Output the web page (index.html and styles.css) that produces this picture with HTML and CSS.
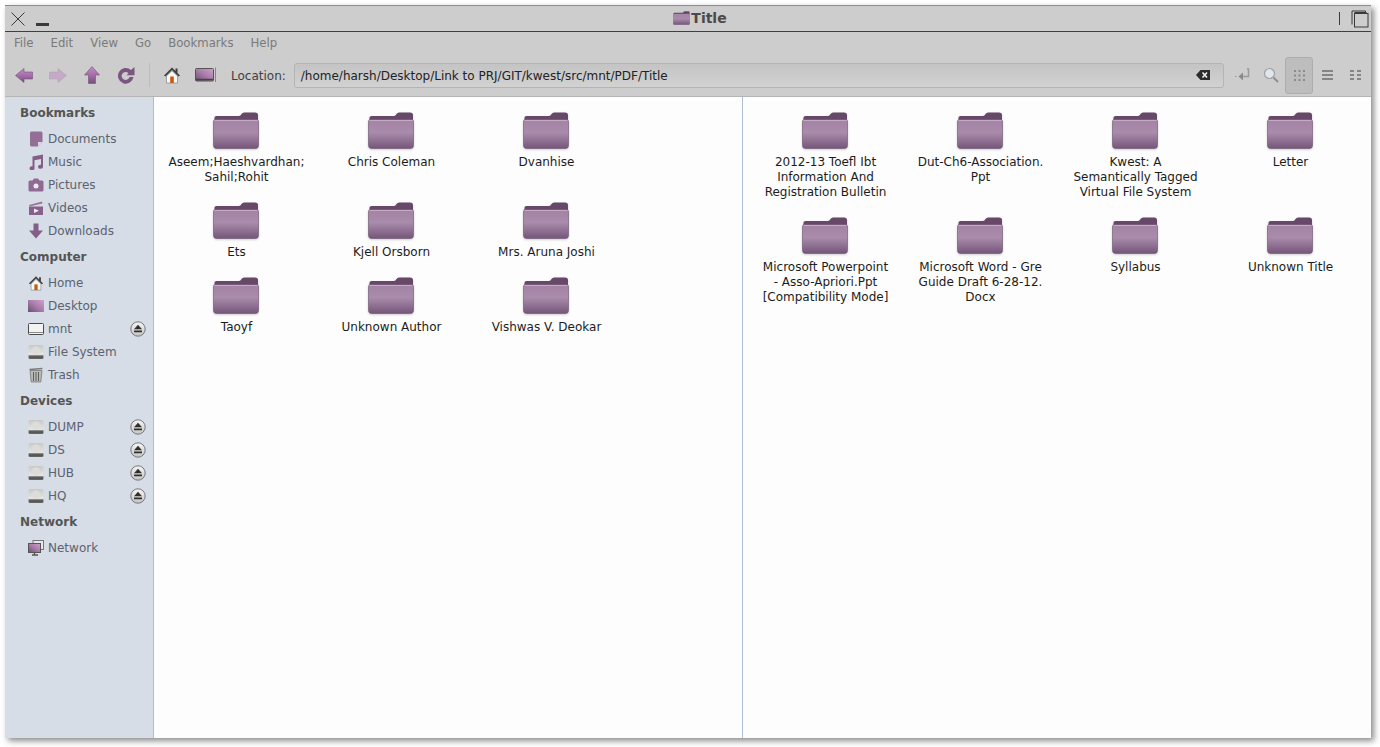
FILE: index.html
```html
<!DOCTYPE html>
<html lang="en">
<head>
  <meta charset="UTF-8">
  <title>Title</title>
  <link rel="stylesheet" href="styles.css">
</head>
<body>
  <svg class="defs" width="0" height="0">
    <defs>
      <linearGradient id="folderFront" x1="0" y1="0" x2="0" y2="1">
        <stop offset="0" stop-color="#a383a4"/>
        <stop offset="0.45" stop-color="#a98bab"/>
        <stop offset="1" stop-color="#75567a"/>
      </linearGradient>
      <linearGradient id="arrowFill" x1="0" y1="0" x2="0" y2="1">
        <stop offset="0" stop-color="#c48cc4"/>
        <stop offset="0.5" stop-color="#a56ea8"/>
        <stop offset="1" stop-color="#74507a"/>
      </linearGradient>
      <linearGradient id="desk" x1="0" y1="1" x2="1" y2="0">
        <stop offset="0" stop-color="#6d4e72"/>
        <stop offset="0.5" stop-color="#a97ca9"/>
        <stop offset="1" stop-color="#cfa0cc"/>
      </linearGradient>
      <linearGradient id="driveFill" x1="0" y1="0" x2="0" y2="1">
        <stop offset="0" stop-color="#c9c9c7"/>
        <stop offset="0.72" stop-color="#e6e6e4"/>
        <stop offset="0.74" stop-color="#8a8a88"/>
        <stop offset="1" stop-color="#5f5f5d"/>
      </linearGradient>
      <linearGradient id="ejectFill" x1="0" y1="0" x2="0" y2="1">
        <stop offset="0" stop-color="#f6f6f4"/>
        <stop offset="1" stop-color="#c4c4c2"/>
      </linearGradient>
      <symbol id="folder" viewBox="0 0 46 37">
        <path d="M1.500 5.500 Q1.500 4 3.500 4 L26 4 Q27.500 4 28.500 2 Q29.500 .5 31 .5 L42 .5 Q45 .5 45 3 L45 10 L1.500 10Z" fill="#674869"/>
        <path d="M.5 9.500 Q.5 7.500 2.500 7.500 L43.500 7.500 Q45.500 7.500 45.500 9.500 L45.500 33.500 Q45.500 36.500 42.500 36.500 L3.500 36.500 Q.5 36.500 .5 33.500Z" fill="url(#folderFront)" stroke="#6d5070" stroke-width=".6"/>
        <path d="M1.500 8.500 L44.500 8.500" stroke="#c3abc4" stroke-width="1"/>
      </symbol>
      <symbol id="drive" viewBox="0 0 16 16">
        <rect x=".5" y="1" width="15" height="14" rx="1.500" fill="url(#driveFill)"/>
        <circle cx="8" cy="6.500" r="4" fill="#dcdcda"/>
        <path d="M1 13 H15" stroke="#3f3f3f" stroke-width="1"/>
      </symbol>
      <symbol id="eject" viewBox="0 0 16 16">
        <circle cx="8" cy="8" r="7.200" fill="url(#ejectFill)" stroke="#77777a" stroke-width="1"/>
        <path d="M8 3.800 L12 8.200 L4 8.200Z M4 9.400 H12 V11.200 H4Z" fill="#2e2e2e"/>
      </symbol>
      <symbol id="home" viewBox="0 0 18 18">
        <path d="M3.500 10 L9 4.800 L14.500 10 V17 H3.500Z" fill="#f7f7f5" stroke="#77777a" stroke-width=".6"/>
        <path d="M9 1.500 L1 9.500 L2.500 10.500 L9 4 L15.500 10.500 L17 9.500 L14.500 7 V2.500 H12.500 V5Z" fill="#3f3f3f"/>
        <rect x="7.200" y="10.500" width="3.600" height="6.500" fill="#c55a11"/>
      </symbol>
    </defs>
  </svg>

  <div class="window">
    <header class="titlebar">
      <div class="title-left">
        <svg width="14" height="14" viewBox="0 0 14 14"><path d="M.5 .5 L13.500 13.500 M13.500 .5 L.5 13.500" stroke="#3a3a3a" stroke-width="1"/></svg>
        <span class="minimize"></span>
      </div>
      <div class="title-center">
        <svg class="title-icon" width="17" height="14"><use href="#folder"/></svg>
        <span>Title</span>
      </div>
      <div class="title-right">
        <span class="divider"></span>
        <svg width="18" height="18" viewBox="0 0 18 18" fill="none" stroke="#3a3a3a" stroke-width="1"><path d="M1 14.500 V1 H14.500 V3"/><rect x="3.500" y="3.500" width="13.500" height="13.500"/><path d="M3.500 2.500 H15.500"/></svg>
      </div>
    </header>

    <nav class="menubar">
      <span>File</span><span>Edit</span><span>View</span><span>Go</span><span>Bookmarks</span><span>Help</span>
    </nav>

    <div class="toolbar">
      <svg class="tool-back" width="18" height="15" viewBox="0 0 18 15"><path d="M.5 7.500 L9 .5 V4 H17.500 V11 H9 V14.500Z" fill="url(#arrowFill)" stroke="#74507a" stroke-width=".6"/></svg>
      <svg class="tool-forward" width="18" height="15" viewBox="0 0 18 15"><path d="M17.500 7.500 L9 .5 V4 H.5 V11 H9 V14.500Z" fill="#c4aac6" stroke="#b39ab6" stroke-width=".5"/></svg>
      <svg class="tool-up" width="16" height="18" viewBox="0 0 16 18"><path d="M8 .5 L15.500 9 H11.500 V17.500 H4.500 V9 H.5Z" fill="url(#arrowFill)" stroke="#74507a" stroke-width=".6"/></svg>
      <svg class="tool-reload" width="18" height="18" viewBox="0 0 18 18"><path d="M14 4 A7.800 7.800 0 1 0 16.500 11 H12.500 A4 4 0 1 1 11.500 7.200 L9.500 9.200 H17.500 V1Z" fill="#7a5680"/></svg>
      <span class="tool-sep"></span>
      <svg class="tool-home" width="18" height="18"><use href="#home"/></svg>
      <svg class="tool-desk" width="22" height="16" viewBox="0 0 22 16"><rect x=".5" y="1.500" width="18" height="12.500" rx="1" fill="url(#desk)" stroke="#555"/><path d="M1 12.500 H18" stroke="#444" stroke-width="1.500"/><path d="M20.500 .5 V15" stroke="#888"/></svg>
      <span class="location-label">Location:</span>
      <div class="location-entry">
        <span class="location-path">/home/harsh/Desktop/Link to PRJ/GIT/kwest/src/mnt/PDF/Title</span>
        <svg width="14" height="10" viewBox="0 0 14 10"><path d="M0 5 L4.500 0 H14 V10 H4.500Z" fill="#2c2c2c"/><path d="M6.500 2.500 L11 7.500 M11 2.500 L6.500 7.500" stroke="#f2f2f2" stroke-width="1.600"/></svg>
      </div>
      <svg class="tool-go" width="16" height="14" viewBox="0 0 16 14" fill="none"><path d="M13 1 H14.500 V8.500 H7" stroke="#9a9a9a" stroke-width="1.500"/><path d="M9 4.500 L4.500 8.500 L9 12.500Z" fill="#8a8a8a"/><path d="M1 8.500 H2.500" stroke="#9a9a9a" stroke-width="1.200"/></svg>
      <svg class="tool-search" width="16" height="16" viewBox="0 0 16 16"><circle cx="6.500" cy="6.500" r="5" fill="#dfe6ee" stroke="#a0a0a0" stroke-width="1.200"/><path d="M10.500 10.500 L15 15" stroke="#8c8c8c" stroke-width="1.800"/></svg>
      <span class="view-active">
        <svg width="11" height="11" viewBox="0 0 11 11" fill="#8a8a8a"><path d="M0 0h2v2H0zM4.500 0h2v2h-2zM9 0h2v2H9zM0 4.500h2v2H0zM4.500 4.500h2v2h-2zM9 4.500h2v2H9zM0 9h2v2H0zM4.500 9h2v2h-2zM9 9h2v2H9z"/></svg>
      </span>
      <svg class="tool-list" width="11" height="10" viewBox="0 0 11 10" fill="#858585"><path d="M0 0h11v2H0zM0 4h11v2H0zM0 8h11v2H0z"/></svg>
      <svg class="tool-compact" width="11" height="10" viewBox="0 0 11 10" fill="#858585"><path d="M0 0h4v2H0zM7 0h4v2H7zM0 4h4v2H0zM7 4h4v2H7zM0 8h4v2H0zM7 8h4v2H7z"/></svg>
    </div>

    <div class="content">
      <aside class="sidebar">
        <h3>Bookmarks</h3>
        <div class="place">
          <svg width="16" height="16" viewBox="0 0 16 16"><path d="M2 2 Q2 .5 3.500 .5 H13 Q14.500 .5 14.500 2 V11 L10 15.500 H3.500 Q2 15.500 2 14Z" fill="#936f96"/><path d="M14.500 11 H10 V15.500Z" fill="#e0d4e2"/></svg>
          <span>Documents</span>
        </div>
        <div class="place">
          <svg width="16" height="16" viewBox="0 0 16 16" fill="#835f88"><path d="M4.500 2.500 L15 .5 V12.500 A2.500 2 0 1 1 13 10.800 V5 L6.500 6.200 V14 A2.500 2 0 1 1 4.500 12.300Z"/></svg>
          <span>Music</span>
        </div>
        <div class="place">
          <svg width="16" height="16" viewBox="0 0 16 16"><path d="M.5 5 Q.5 3.500 2 3.500 H4.500 L6 1.500 H10 L11.500 3.500 H14 Q15.500 3.500 15.500 5 V13 Q15.500 14.500 14 14.500 H2 Q.5 14.500 .5 13Z" fill="#8f6b92"/><circle cx="8" cy="9" r="2.500" fill="#f0e8f0"/></svg>
          <span>Pictures</span>
        </div>
        <div class="place">
          <svg width="16" height="16" viewBox="0 0 16 16"><rect x="1" y="6.500" width="14" height="8.500" fill="#85608a"/><path d="M1 5 L14 1.500 L14.500 3.500 L1.500 6.500Z" fill="#9a769c"/><path d="M6 8.500 L11 10.800 L6 13Z" fill="#f0e8f0"/></svg>
          <span>Videos</span>
        </div>
        <div class="place">
          <svg width="16" height="16" viewBox="0 0 16 16"><path d="M5.500 .5 H10.500 V7.500 H15 L8 15.500 L1 7.500 H5.500Z" fill="#835f88"/></svg>
          <span>Downloads</span>
        </div>

        <h3>Computer</h3>
        <div class="place">
          <svg width="16" height="16"><use href="#home"/></svg>
          <span>Home</span>
        </div>
        <div class="place">
          <svg width="16" height="16" viewBox="0 0 16 16"><rect x="0" y="2" width="16" height="12" fill="url(#desk)"/></svg>
          <span>Desktop</span>
        </div>
        <div class="place">
          <svg width="16" height="16" viewBox="0 0 16 16"><rect x=".5" y="2.500" width="15" height="11" rx="1" fill="#f2f2f0" stroke="#4a4a4a"/><path d="M1 11.500 H15" stroke="#8a8a8a"/></svg>
          <span>mnt</span>
          <svg class="eject" width="16" height="16"><use href="#eject"/></svg>
        </div>
        <div class="place">
          <svg width="16" height="16"><use href="#drive"/></svg>
          <span>File System</span>
        </div>
        <div class="place">
          <svg width="16" height="16" viewBox="0 0 16 16"><path d="M2 3.500 H14 L12.800 15 H3.200Z" fill="#b9b9b6" stroke="#6f6f6f" stroke-width=".7"/><path d="M5.500 5 V14 M8 5 V14 M10.500 5 V14" stroke="#5f5f5f"/><path d="M1.500 2.500 L14.500 1.500" stroke="#7a7a7a" stroke-width="1.400"/></svg>
          <span>Trash</span>
        </div>

        <h3>Devices</h3>
        <div class="place">
          <svg width="16" height="16"><use href="#drive"/></svg>
          <span>DUMP</span>
          <svg class="eject" width="16" height="16"><use href="#eject"/></svg>
        </div>
        <div class="place">
          <svg width="16" height="16"><use href="#drive"/></svg>
          <span>DS</span>
          <svg class="eject" width="16" height="16"><use href="#eject"/></svg>
        </div>
        <div class="place">
          <svg width="16" height="16"><use href="#drive"/></svg>
          <span>HUB</span>
          <svg class="eject" width="16" height="16"><use href="#eject"/></svg>
        </div>
        <div class="place">
          <svg width="16" height="16"><use href="#drive"/></svg>
          <span>HQ</span>
          <svg class="eject" width="16" height="16"><use href="#eject"/></svg>
        </div>

        <h3>Network</h3>
        <div class="place">
          <svg width="16" height="16" viewBox="0 0 16 16"><rect x="5" y=".5" width="10.500" height="9" fill="#e8e8ec" stroke="#777"/><rect x=".5" y="3.500" width="12" height="9" fill="url(#desk)" stroke="#555"/><path d="M4 15 H10 M6.500 12.500 V15" stroke="#555" stroke-width="1.300"/></svg>
          <span>Network</span>
        </div>
      </aside>

      <section class="pane pane-left">
        <div class="file"><svg width="46" height="37"><use href="#folder"/></svg><span>Aseem;Haeshvardhan;<br>Sahil;Rohit</span></div>
        <div class="file"><svg width="46" height="37"><use href="#folder"/></svg><span>Chris Coleman</span></div>
        <div class="file"><svg width="46" height="37"><use href="#folder"/></svg><span>Dvanhise</span></div>
        <div class="file"><svg width="46" height="37"><use href="#folder"/></svg><span>Ets</span></div>
        <div class="file"><svg width="46" height="37"><use href="#folder"/></svg><span>Kjell Orsborn</span></div>
        <div class="file"><svg width="46" height="37"><use href="#folder"/></svg><span>Mrs. Aruna Joshi</span></div>
        <div class="file"><svg width="46" height="37"><use href="#folder"/></svg><span>Taoyf</span></div>
        <div class="file"><svg width="46" height="37"><use href="#folder"/></svg><span>Unknown Author</span></div>
        <div class="file"><svg width="46" height="37"><use href="#folder"/></svg><span>Vishwas V. Deokar</span></div>
      </section>

      <section class="pane pane-right">
        <div class="file"><svg width="46" height="37"><use href="#folder"/></svg><span>2012-13 Toefl Ibt<br>Information And<br>Registration Bulletin</span></div>
        <div class="file"><svg width="46" height="37"><use href="#folder"/></svg><span>Dut-Ch6-Association.<br>Ppt</span></div>
        <div class="file"><svg width="46" height="37"><use href="#folder"/></svg><span>Kwest: A<br>Semantically Tagged<br>Virtual File System</span></div>
        <div class="file"><svg width="46" height="37"><use href="#folder"/></svg><span>Letter</span></div>
        <div class="file"><svg width="46" height="37"><use href="#folder"/></svg><span>Microsoft Powerpoint<br>- Asso-Apriori.Ppt<br>[Compatibility Mode]</span></div>
        <div class="file"><svg width="46" height="37"><use href="#folder"/></svg><span>Microsoft Word - Gre<br>Guide Draft 6-28-12.<br>Docx</span></div>
        <div class="file"><svg width="46" height="37"><use href="#folder"/></svg><span>Syllabus</span></div>
        <div class="file"><svg width="46" height="37"><use href="#folder"/></svg><span>Unknown Title</span></div>
      </section>
    </div>
  </div>
</body>
</html>
```

FILE: styles.css
```css
html, body {
  height: 100%;
}

body {
  margin: 0;
  padding: 5px 9px 9px 5px;
  box-sizing: border-box;
  background-color: #fff;
  font-family: "DejaVu Sans", sans-serif;
  font-size: 12px;
  overflow: hidden;
}

.defs {
  position: absolute;
}

.window {
  height: 100%;
  display: flex;
  flex-direction: column;
  background-color: #cdcdcd;
  box-shadow: 3px 3px 6px rgba(0,0,0,0.45);
}

.titlebar {
  height: 27px;
  flex: none;
  display: flex;
  align-items: center;
  box-sizing: border-box;
  border-top: 1px solid #8c8c8c;
  border-bottom: 1px solid #3f3f3f;
  padding-left: 6px;
  position: relative;
}

.title-left {
  display: flex;
  align-items: center;
  gap: 11px;
}

.minimize {
  width: 13px;
  height: 3px;
  background-color: #3a3a3a;
  margin-top: 11px;
}

.title-center {
  position: absolute;
  left: 24px;
  right: 0;
  top: 4px;
  display: flex;
  justify-content: center;
  align-items: center;
  gap: 1px;
  font-weight: bold;
  font-size: 14px;
  color: #4a4a4a;
  pointer-events: none;
}

.title-right {
  margin-left: auto;
  display: flex;
  align-items: center;
  gap: 11px;
  padding-right: 2px;
}

.divider {
  width: 1px;
  height: 13px;
  background-color: #3a3a3a;
}

.menubar {
  flex: none;
  height: 22px;
  display: flex;
  align-items: center;
  gap: 17px;
  padding-left: 9px;
  font-size: 11.7px;
  color: #7a7a7a;
}

.toolbar {
  flex: none;
  height: 43px;
  display: flex;
  align-items: center;
  box-sizing: border-box;
  border-bottom: 1px solid #b5b5b5;
  padding-left: 10px;
}

.tool-forward { margin-left: 16px; }
.tool-up { margin-left: 17px; }
.tool-reload { margin-left: 17px; }

.tool-sep {
  width: 1px;
  height: 24px;
  background-color: #bcbcbc;
  margin-left: 14px;
}

.tool-home { margin-left: 13px; }
.tool-desk { margin-left: 14px; }

.location-label {
  margin-left: 14px;
  padding-top: 1px;
  color: #3f3f3f;
}

.location-entry {
  flex: 1;
  height: 25px;
  margin-left: 8px;
  display: flex;
  align-items: center;
  justify-content: space-between;
  box-sizing: border-box;
  padding: 0 13px 0 6px;
  border: 1px solid #b4b4b4;
  border-radius: 3px;
  background: linear-gradient(#c4c4c4, #d2d2d2);
  color: #222;
}

.location-path {
  padding-top: 1px;
}

.tool-go { margin-left: 10px; }
.tool-search { margin-left: 13px; }

.view-active {
  width: 28px;
  height: 37px;
  margin-left: 6px;
  display: flex;
  align-items: center;
  justify-content: center;
  box-sizing: border-box;
  border: 1px solid #adadad;
  border-radius: 3px;
  background-color: #bdbdbd;
}

.tool-list { margin-left: 9px; }
.tool-compact { margin-left: 17px; margin-right: 10px; }

.content {
  flex: 1;
  min-height: 0;
  display: flex;
}

.sidebar {
  width: 149px;
  flex: none;
  box-sizing: border-box;
  padding: 7px 7px 0 15px;
  background-color: #d6dde6;
  border-right: 1px solid #b3bac3;
  color: #5c6270;
}

.sidebar h3 {
  margin: 0;
  height: 18px;
  line-height: 18px;
  font-size: 12px;
  font-weight: bold;
  color: #555;
}

.place {
  height: 23px;
  display: flex;
  align-items: center;
  gap: 4px;
  padding-left: 8px;
}

.sidebar h3 + .place {
  margin-top: 5px;
}

.place + h3 {
  margin-top: 6px;
}

.eject {
  margin-left: auto;
}

.pane {
  box-sizing: border-box;
  display: grid;
  grid-template-columns: repeat(auto-fill, 155px);
  align-content: start;
  align-items: start;
  padding: 15px 0 0 5px;
  background-color: #fdfdfd;
}

.pane-left {
  width: 589px;
  flex: none;
  border-right: 1px solid #b0c0d4;
}

.pane-right {
  flex: 1;
}

.file {
  display: flex;
  flex-direction: column;
  align-items: center;
  padding-bottom: 17px;
  color: #1c1c1c;
  text-align: center;
  line-height: 15px;
}

.file svg {
  margin: 0 2px 6px 0;
  filter: drop-shadow(0 1px 1px rgba(0,0,0,0.2));
}

.file span {
  display: block;
}
```
